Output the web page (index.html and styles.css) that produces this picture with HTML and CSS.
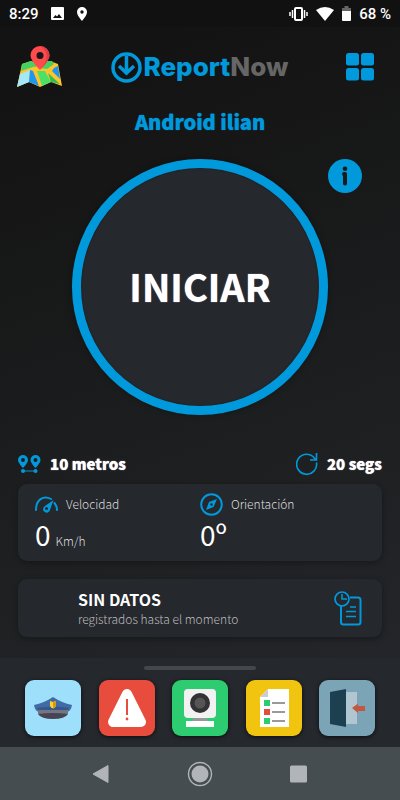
FILE: index.html
```
<!DOCTYPE html>
<html lang="es">
<head>
  <meta charset="UTF-8">
  <meta name="viewport" content="width=device-width, initial-scale=1.0">
  <link rel="stylesheet" href="styles.css">
  <title>ReportNow</title>
</head>
<body>
  <div class="status-bar">
    <span class="status-time">8:29</span>
    <svg class="status-photo" width="13" height="13" viewBox="0 0 13 13"><path fill="#fff" fill-rule="evenodd" d="M1 0h11a1 1 0 0 1 1 1v11a1 1 0 0 1-1 1H1a1 1 0 0 1-1-1V1a1 1 0 0 1 1-1zM2 11h9L8 7 6 9.500 4.500 8z"/></svg>
    <svg width="10" height="14" viewBox="0 0 10 14"><path fill="#fff" fill-rule="evenodd" d="M5 0a5 5 0 0 1 5 5c0 3.500-5 9-5 9S0 8.500 0 5a5 5 0 0 1 5-5zM5 3.300a1.700 1.700 0 1 0 0 3.400 1.700 1.700 0 0 0 0-3.400z"/></svg>
    <div class="status-right">
      <svg width="19" height="14" viewBox="0 0 19 14" fill="none" stroke="#fff"><rect x="6" y="1" width="7" height="12" rx="1" stroke-width="2"/><path stroke-width="1.500" d="M3.500 3v8M15.500 3v8M1 5v4M18 5v4"/></svg>
      <svg width="18" height="14" viewBox="0 0 18 14"><path fill="#fff" d="M0 3Q9-3 18 3L9 14z"/></svg>
      <svg width="9" height="15" viewBox="0 0 9 15"><path fill="#666" d="M0 2h2.500V0h4v2H9v4H0z"/><path fill="#fff" d="M0 5h9v9a1 1 0 0 1-1 1H1a1 1 0 0 1-1-1z"/></svg>
      <span>68 %</span>
    </div>
  </div>

  <header class="header">
    <button type="button" class="icon-button map-button" aria-label="Mapa">
      <svg width="46" height="42" viewBox="0 0 46 42">
        <path fill="#ffc32b" d="M5 18l9-3 9 3 10-3 8 3 4 22-11-4-11 5-11-5L0 41z"/>
        <path fill="#46d160" d="M5 18l9-3 9 5-7 1-12 4zM30 15l5 0 2 3-7 5-6-1z"/>
        <path fill="#a4e8f8" d="M3 28l10-4-1 12-12 5z"/>
        <path fill="#1e96f0" d="M13 24l3 1 6 15-10-4zM37 22l4-2 2 13-8-8z"/>
        <path fill="#4ce067" d="M20 25l8 0 6 11-9 4z"/>
        <path fill="#2fbf55" d="M31 27l12 11-9-2z"/>
        <path fill="#ff4b4b" d="M23 0a9.500 9.500 0 0 1 9.500 9.500C32.500 15 23 24 23 24s-9.500-9-9.500-14.500A9.500 9.500 0 0 1 23 0z"/>
        <path fill="#e03c48" d="M23 0a9.500 9.500 0 0 1 9.500 9.500C32.500 15 23 24 23 24c8-9 10-18 0-24z"/>
        <circle cx="23" cy="9.500" r="3.500" fill="#1b1718"/>
      </svg>
    </button>
    <div class="logo">
      <svg width="31" height="31" viewBox="0 0 31 31" fill="none" stroke="#0099dc" stroke-width="3.500"><circle cx="15.500" cy="15.500" r="13.500"/><path d="M15.500 4v16M8 14l7.500 7L23 14"/></svg>
      <span class="logo-text">Report<span class="logo-now">Now</span></span>
    </div>
    <button type="button" class="icon-button menu-button" aria-label="Menú">
      <svg width="28" height="28" viewBox="0 0 28 28" fill="#0099dc"><rect width="13" height="12.500" rx="2.500"/><rect x="15" width="13" height="12.500" rx="2.500"/><rect y="15" width="13" height="12.500" rx="2.500"/><rect x="15" y="15" width="13" height="12.500" rx="2.500"/></svg>
    </button>
  </header>

  <main class="main">
    <h1 class="user-name">Android ilian</h1>

    <div class="start-row">
      <button type="button" class="start-button">INICIAR</button>
      <button type="button" class="icon-button info-button" aria-label="Información">
        <svg width="34" height="34" viewBox="0 0 34 34"><circle cx="17" cy="17" r="17" fill="#0099dc"/><circle cx="17" cy="9.700" r="2.300" fill="#191a1b"/><path d="M16 15H17v9.500" fill="none" stroke="#191a1b" stroke-width="4" stroke-linecap="round" stroke-linejoin="round"/></svg>
      </button>
    </div>

    <div class="tracking">
      <div class="tracking-item">
        <svg width="23" height="18" viewBox="0 0 23 18"><g fill="#0099dc"><path fill-rule="evenodd" d="M5 0a5 5 0 0 1 5 5c0 3-5 8-5 8S0 8 0 5a5 5 0 0 1 5-5zm0 3a2 2 0 1 0 0 4 2 2 0 0 0 0-4zM17.500 0a5 5 0 0 1 5 5c0 3-5 8-5 8s-5-5-5-8a5 5 0 0 1 5-5zm0 3a2 2 0 1 0 0 4 2 2 0 0 0 0-4z"/><circle cx="5" cy="16" r="2"/><circle cx="17.500" cy="16" r="2"/><path d="M5 15.500h12v1H5z"/></g></svg>
        <span>10 metros</span>
      </div>
      <div class="tracking-item">
        <svg width="22" height="22" viewBox="0 0 22 22" fill="none" stroke="#0099dc" stroke-width="1.600"><path d="M20.500 9.500A10 10 0 1 1 17 3.500l2.500 3M20.500 0v7H14"/></svg>
        <span>20 segs</span>
      </div>
    </div>

    <section class="card readings">
      <div class="reading">
        <div class="reading-label">
          <svg width="23" height="22" viewBox="0 0 23 22" fill="none" stroke="#0099dc" stroke-width="2"><path d="M1 17C1 6 9 2 16 6M19.500 10q2.500 3 2.500 7" stroke-linecap="round"/><path fill="#0099dc" fill-rule="evenodd" stroke="none" d="M18.500 7L15 17a3.500 3.500 0 1 1-5-4zM11.500 14a1.500 1.500 0 1 0 0 3 1.500 1.500 0 0 0 0-3z"/></svg>
          <span>Velocidad</span>
        </div>
        <div class="reading-value">0 <span class="unit">Km/h</span></div>
      </div>
      <div class="reading">
        <div class="reading-label">
          <svg width="23" height="23" viewBox="0 0 23 23"><circle cx="11.500" cy="11.500" r="10.300" fill="none" stroke="#0099dc" stroke-width="2"/><path fill="#0099dc" d="M17 6l-3.500 8L6 17l3-8z"/><circle cx="11.500" cy="11.500" r="1.200" fill="#25282d"/></svg>
          <span>Orientación</span>
        </div>
        <div class="reading-value">0º</div>
      </div>
    </section>

    <section class="card records">
      <div class="records-text">
        <h2 class="records-title">SIN DATOS</h2>
        <p class="records-note">registrados hasta el momento</p>
      </div>
      <svg width="28" height="35" viewBox="0 0 28 35" fill="none" stroke="#0099dc" stroke-width="2"><path d="M16 6.500h8a2.500 2.500 0 0 1 2.500 2.500v22a2.500 2.500 0 0 1-2.500 2.500H9.500A2.500 2.500 0 0 1 7 31V15"/><circle cx="8" cy="8" r="7" stroke-width="1.700"/><path stroke-width="1.500" d="M8 3v5h5M16 16h6M12 20.500h10M12 25.500h10"/></svg>
    </section>
  </main>

  <footer class="sheet">
    <div class="handle"></div>
    <div class="actions">
      <button type="button" class="action police" aria-label="Policía">
        <svg width="56" height="56" viewBox="0 0 56 56"><path fill="#416ba5" d="M9 25q10-2 19-8 9 6 19 8-1 6-5 7H14q-4-1-5-7z"/><path fill="#34578c" d="M12 28q16-3 32 0l-2 3H14z"/><path fill="#717584" d="M13 30h30v4H13z"/><path fill="#484453" d="M13 34q15-2 30 0-3 5-15 5t-15-5z"/><path fill="#ffd22e" d="M25 21l3 1 3-1v5q-1 2-3 2.500-2-.5-3-2.500z"/><path fill="#d39c15" d="M28 22l3-1v5q-1 2-3 2.500z"/></svg>
      </button>
      <button type="button" class="action alert" aria-label="Alerta">
        <svg width="56" height="56" viewBox="0 0 56 56"><path d="M28 14L14 42h28z" fill="#fff" stroke="#fff" stroke-width="10" stroke-linejoin="round"/><path d="M28 19v16" stroke="#e84c3d" stroke-width="2"/><circle cx="28" cy="39" r="1.400" fill="#e84c3d"/></svg>
      </button>
      <button type="button" class="action camera" aria-label="Cámara">
        <svg width="56" height="56" viewBox="0 0 56 56"><path fill="#999" d="M21 37h14v4H21z"/><rect x="12" y="9" width="32" height="29" rx="4" fill="#f2f2f2"/><path fill="#fff" d="M14 41h28v6H14z"/><circle cx="28" cy="23" r="10" fill="#333"/><circle cx="28" cy="23" r="5.500" fill="#555"/></svg>
      </button>
      <button type="button" class="action report" aria-label="Reporte">
        <svg width="56" height="56" viewBox="0 0 56 56"><path fill="#fff" d="M22 9h21v38H14V17z"/><path fill="#ccc" d="M22 9v8h-8z"/><path fill="#2ecc71" d="M18 20h6v6h-6zM18 38h6v6h-6z"/><path fill="#e84c3d" d="M18 29h6v6h-6z"/><path stroke="#999" stroke-width="2" d="M26 23h13M26 32h13M26 41h13"/></svg>
      </button>
      <button type="button" class="action exit" aria-label="Salir">
        <svg width="56" height="56" viewBox="0 0 56 56"><path fill="#b0c7d1" d="M25 12h13v32H25z"/><path fill="#1d4050" d="M11 12l16-3v38l-16-3z"/><path fill="#c4573f" d="M33 28l6-4.500V26h7v5h-7v2z"/></svg>
      </button>
    </div>
  </footer>

  <nav class="system-nav">
    <button type="button" class="icon-button" aria-label="Atrás"><svg width="26" height="26" viewBox="0 0 26 26"><path fill="#b1b5b7" stroke="#b1b5b7" stroke-linejoin="round" d="M5 13l15-8.500v17z"/></svg></button>
    <button type="button" class="icon-button" aria-label="Inicio"><svg width="26" height="26" viewBox="0 0 26 26"><circle cx="13" cy="13" r="11.500" fill="none" stroke="#b1b5b7" stroke-width="1.400"/><circle cx="13" cy="13" r="8.500" fill="#b1b5b7"/></svg></button>
    <button type="button" class="icon-button" aria-label="Recientes"><svg width="26" height="26" viewBox="0 0 26 26"><rect x="4" y="4.500" width="17" height="17" rx="1.500" fill="#b1b5b7"/></svg></button>
  </nav>
</body>
</html>
```

FILE: styles.css
```
* {
  box-sizing: border-box;
}

body {
  font-family: "Noto Sans CJK JP", "Noto Sans", sans-serif;
  background: linear-gradient(160deg, #131313 10%, #1c1d1e 50%, #25282d 95%);
  color: #fff;
  margin: 0;
  min-height: 100vh;
  display: flex;
  flex-direction: column;
}

h1, h2, p {
  margin: 0;
}

svg {
  display: block;
  flex: none;
}

button {
  border: none;
  padding: 0;
  font-family: inherit;
  color: inherit;
  cursor: pointer;
}

.icon-button {
  background: none;
}

/* Android status bar */
.status-bar {
  display: flex;
  align-items: center;
  height: 27px;
  padding: 0 9px;
  background-color: #111112;
  font-family: Roboto, sans-serif;
  font-size: 15px;
  font-weight: 500;
}

.status-photo {
  margin: 0 13px 0 12px;
}

.status-right {
  display: flex;
  align-items: center;
  gap: 8px;
  margin-left: auto;
}

.header {
  display: grid;
  grid-template-columns: 1fr auto 1fr;
  align-items: center;
  height: 80px;
  padding: 0 26px 0 17px;
}

.map-button {
  justify-self: start;
}

.menu-button {
  justify-self: end;
}

.logo {
  display: flex;
  align-items: center;
  gap: 2px;
  margin-left: 8px;
}

.logo-text {
  font-family: Inter, sans-serif;
  font-size: 26px;
  line-height: 30px;
  font-weight: 800;
  color: #0099dc;
}

.logo-now {
  color: #666;
}

.main {
  flex: 1;
  padding: 0 18px 20px;
}

.user-name {
  font-size: 20px;
  line-height: 30px;
  font-weight: 900;
  color: #0099dc;
  text-align: center;
  text-shadow: 0 0 1px #0099dc;
}

/* Start button with the info icon on its right */
.start-row {
  display: grid;
  grid-template-columns: 1fr 256px 1fr;
  margin-top: 22px;
}

.start-button {
  grid-column: 2;
  height: 256px;
  padding-bottom: 4px;
  border-radius: 50%;
  border: 9px solid #0099dc;
  background-color: #25282d;
  font-size: 38px;
  font-weight: 700;
  text-shadow: 0 0 1px #fff;
  box-shadow: 0 0 6px rgba(0, 0, 0, 0.3), inset 0 0 2px rgba(0, 0, 0, 0.4);
}

.info-button {
  justify-self: start;
  align-self: start;
}

.tracking {
  display: flex;
  justify-content: space-between;
  margin: 37px 0 8px;
}

.tracking-item {
  display: flex;
  align-items: center;
  gap: 9px;
  font-size: 15px;
  line-height: 24px;
  font-weight: 900;
  text-shadow: 0 0 1px #fff;
}

.card {
  background-color: #25282d;
  border-radius: 9px;
  box-shadow: 0 2px 6px rgba(0, 0, 0, 0.3);
}

.readings {
  display: grid;
  grid-template-columns: 1fr 1fr;
  padding: 8px 17px;
}

.reading-label {
  display: flex;
  align-items: center;
  gap: 8px;
  font-size: 12px;
  line-height: 24px;
  font-weight: 300;
  color: #ddd;
}

.reading-value {
  display: flex;
  align-items: baseline;
  gap: 5px;
  font-size: 28px;
  line-height: 37px;
}

.unit {
  font-size: 12px;
  line-height: 18px;
  font-weight: 300;
  color: #ddd;
}

.records {
  display: flex;
  align-items: center;
  justify-content: space-between;
  margin-top: 18px;
  padding: 9px 20px 9px 60px;
}

.records-title {
  font-size: 16px;
  line-height: 22px;
  font-weight: 700;
}

.records-note {
  font-size: 12px;
  line-height: 18px;
  font-weight: 300;
  color: #bbb;
}

/* Bottom sheet */
.sheet {
  background-color: #25282d;
  padding: 8px 25px 11px;
}

.handle {
  width: 112px;
  height: 4px;
  margin: 0 auto 10px;
  border-radius: 2px;
  background-color: #45484b;
}

.actions {
  display: flex;
  justify-content: space-between;
}

.action {
  width: 56px;
  height: 56px;
  border-radius: 9px;
  box-shadow: 0 1px 4px rgba(0, 0, 0, 0.7);
}

.police {
  background-color: #9edffc;
}

.alert {
  background-color: #e84c3d;
}

.camera {
  background-color: #2ecc71;
}

.report {
  background-color: #f1c40f;
}

.exit {
  background-color: #7ba5b7;
}

.system-nav {
  display: flex;
  align-items: center;
  justify-content: center;
  gap: 73px;
  height: 53px;
  background-color: #454d51;
}
```
